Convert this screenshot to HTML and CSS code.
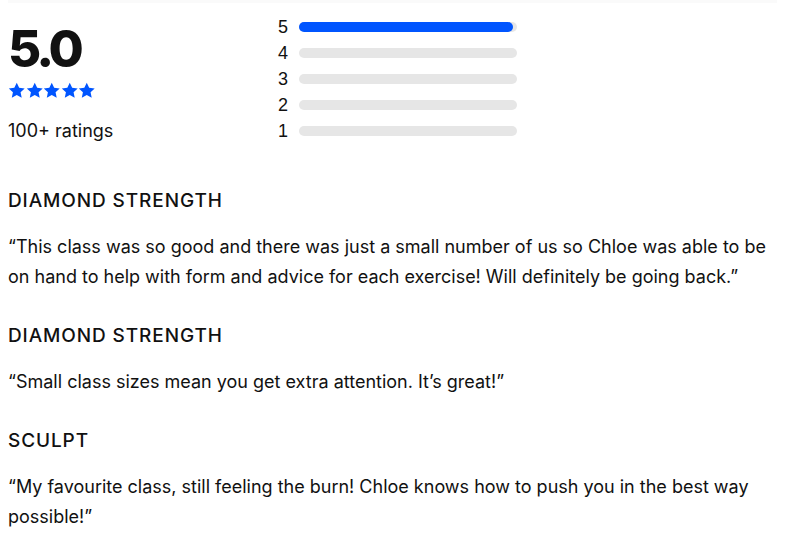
FILE: index.html
```html
<!DOCTYPE html>
<html lang="en">
<head>
<meta charset="UTF-8">
<meta name="viewport" content="width=device-width, initial-scale=1.0">
<title>Reviews</title>
<link rel="stylesheet" href="styles.css">
</head>
<body>

<div class="reviews">
  <div class="summary">
    <div class="score">
      <div class="score-value">5.0</div>
      <div class="stars">
        <svg viewBox="0 0 24 24"><path d="M12 1l3.4 7.2 7.8.9-5.8 5.3 1.6 7.7L12 18.2l-7 3.9 1.6-7.7L.8 9.1l7.8-.9z"/></svg>
        <svg viewBox="0 0 24 24"><path d="M12 1l3.4 7.2 7.8.9-5.8 5.3 1.6 7.7L12 18.2l-7 3.9 1.6-7.7L.8 9.1l7.8-.9z"/></svg>
        <svg viewBox="0 0 24 24"><path d="M12 1l3.4 7.2 7.8.9-5.8 5.3 1.6 7.7L12 18.2l-7 3.9 1.6-7.7L.8 9.1l7.8-.9z"/></svg>
        <svg viewBox="0 0 24 24"><path d="M12 1l3.4 7.2 7.8.9-5.8 5.3 1.6 7.7L12 18.2l-7 3.9 1.6-7.7L.8 9.1l7.8-.9z"/></svg>
        <svg viewBox="0 0 24 24"><path d="M12 1l3.4 7.2 7.8.9-5.8 5.3 1.6 7.7L12 18.2l-7 3.9 1.6-7.7L.8 9.1l7.8-.9z"/></svg>
      </div>
      <div class="ratings-count">100+ ratings</div>
    </div>

    <div class="breakdown">
      <div class="row"><span class="num">5</span><div class="track"><div class="fill" style="width: 98%"></div></div></div>
      <div class="row"><span class="num">4</span><div class="track"></div></div>
      <div class="row"><span class="num">3</span><div class="track"></div></div>
      <div class="row"><span class="num">2</span><div class="track"></div></div>
      <div class="row"><span class="num">1</span><div class="track"></div></div>
    </div>
  </div>

  <div class="review">
    <h3>DIAMOND STRENGTH</h3>
    <p>“This class was so good and there was just a small number of us so Chloe was able to be on hand to help with form and advice for each exercise! Will definitely be going back.”</p>
  </div>

  <div class="review">
    <h3>DIAMOND STRENGTH</h3>
    <p>“Small class sizes mean you get extra attention. It’s great!”</p>
  </div>

  <div class="review">
    <h3>SCULPT</h3>
    <p>“My favourite class, still feeling the burn! Chloe knows how to push you in the best way possible!”</p>
  </div>
</div>

</body>
</html>
```

FILE: styles.css
```css
body {
  font-family: Inter, "Open Sans", sans-serif;
  color: #111;
  background-color: #fff;
  margin: 0;
  padding: 0 8px;
}

.reviews {
  border-top: 3px solid #fafafa;
}

.summary {
  display: flex;
  padding-top: 11px;
}

.score {
  width: 270px;
  padding-top: 3px;
}

.score-value {
  font-size: 51px;
  font-weight: 800;
  line-height: 64px;
  letter-spacing: -4px;
}

.stars {
  display: flex;
  margin-top: 1px;
}

.stars svg {
  width: 17.5px;
  height: 17px;
  fill: #0055ff;
}

.ratings-count {
  font-size: 18px;
  margin-top: 21px;
}

.breakdown {
  display: flex;
  flex-direction: column;
  gap: 6px;
  width: 239px;
  padding-top: 3px;
}

.row {
  display: flex;
  align-items: center;
  gap: 11px;
  height: 20px;
}

.num {
  font-family: "Liberation Sans", Arial, sans-serif;
  font-size: 18px;
}

.track {
  flex: 1;
  height: 10px;
  border-radius: 5px;
  background-color: #e6e6e6;
}

.fill {
  height: 100%;
  border-radius: 5px;
  background-color: #0055ff;
}

.review {
  margin-top: 48px;
}

.review + .review {
  margin-top: 32px;
}

.review h3 {
  font-size: 19px;
  font-weight: 500;
  letter-spacing: 0.9px;
  margin: 0;
  line-height: 24px;
}

.review p {
  font-size: 18px;
  line-height: 30px;
  margin: 19px 0 0;
}
```
